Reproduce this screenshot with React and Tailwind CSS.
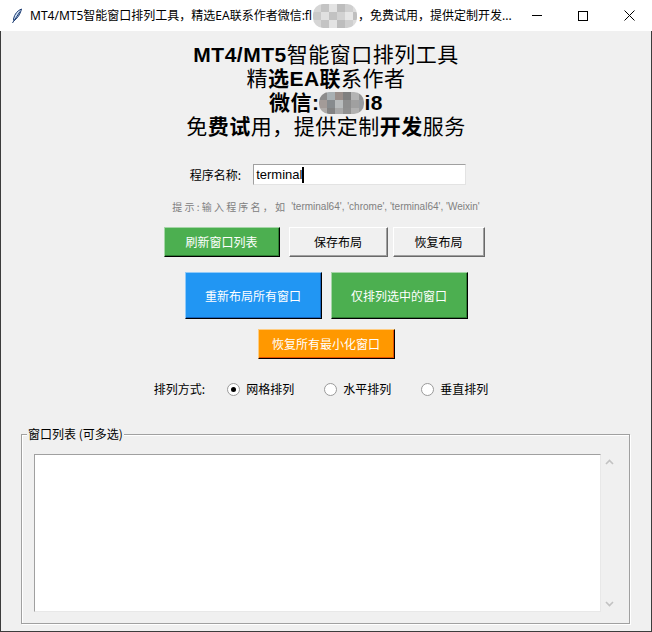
import React from "react";

const CJK = { fontFamily: '"Noto Sans CJK SC", "Noto Sans", sans-serif' };
const ARIAL_CJK = { fontFamily: '"Liberation Sans", "Noto Sans CJK SC", sans-serif' };

function Mosaic({ cols, rows, size, colors, className }) {
  const cells = [];
  for (let r = 0; r < rows; r++) {
    for (let c = 0; c < cols; c++) {
      cells.push(
        <div
          key={r + "-" + c}
          style={{ width: size, height: size, background: colors[(r * cols + c) % colors.length] }}
        />
      );
    }
  }
  return (
    <span
      className={"inline-grid overflow-hidden rounded-[10px] blur-[0.6px] align-middle " + className}
      style={{ gridTemplateColumns: `repeat(${cols}, ${size}px)` }}
    >
      {cells}
    </span>
  );
}

function Feather() {
  return (
    <svg width="12" height="16" viewBox="0 0 12 16">
      <path d="M10.5 1 C6.5 2.5 3.5 6 2.5 11 L2.8 12.5 C6 11 9 7 10.5 1 Z" fill="#cfe0f5" stroke="#1d3d73" strokeWidth="1" />
      <path d="M9 3.5 L3 13 M1.5 15 L3 12.5" stroke="#1d3d73" strokeWidth="1" fill="none" />
    </svg>
  );
}

function ColorButton({ bg, light, dark, className, children }) {
  return (
    <div
      className={"flex items-center justify-center text-white text-[12px] border-t border-l border-r border-b border-r-black border-b-black " + className}
      style={{
        ...CJK,
        background: bg,
        borderTopColor: light,
        borderLeftColor: light,
        boxShadow: `inset -1px -1px 0 ${dark}`,
      }}
    >
      {children}
    </div>
  );
}

function GrayButton({ className, children }) {
  return (
    <div
      className={"flex items-center justify-center text-black text-[12px] bg-[#f0f0f0] border-t border-l border-white border-r border-b border-r-[#696969] border-b-[#696969] shadow-[inset_-1px_-1px_0_#a0a0a0] " + className}
      style={CJK}
    >
      {children}
    </div>
  );
}

function Radio({ checked, label }) {
  return (
    <div className="flex items-center">
      <div className="w-[13px] h-[13px] rounded-full border border-[#9a9a9a] bg-white flex items-center justify-center">
        {checked && <div className="w-[5px] h-[5px] rounded-full bg-black" />}
      </div>
      <span className="ml-[6px] text-[12px] text-black" style={CJK}>{label}</span>
    </div>
  );
}

export default function App() {
  const darkBlur = ["#8c8c8c", "#a9b0b3", "#9a8f8b", "#7f7f7f", "#b4b4b4", "#959595", "#a39b98", "#878b8e", "#b9bcbd", "#8e8e8e", "#a0a0a0", "#999ca0", "#aeaaa8", "#838383", "#a8a8a8", "#909090", "#b0b0b0", "#9c9c9c"];
  const lightBlur = ["#d6d6d6", "#c4c4c4", "#e3e3e3", "#bdbdbd", "#cfcfcf", "#dcdcdc", "#c9c9c9", "#e0e0e0", "#c2c2c2", "#d2d2d2", "#e6e6e6", "#bfbfbf"];

  return (
    <div className="w-[652px] h-[632px] flex flex-col bg-[#f0f0f0] overflow-hidden">
      {/* Title bar */}
      <div className="h-[31px] bg-white flex items-center shrink-0">
        <div className="w-[30px] flex justify-center pl-[4px]"><Feather /></div>
        <div className="flex items-center text-[12px] text-black whitespace-nowrap" style={{ fontFamily: '"Noto Sans", "Noto Sans CJK SC", sans-serif' }}>
          <span>MT4/MT5智能窗口排列工具，精选EA联系作者微信:fl</span>
          <Mosaic cols={6} rows={3} size={8} colors={lightBlur} className="w-[44px] h-[24px] mx-[1px]" />
          <span>，免费试用，提供定制开发...</span>
        </div>
        <div className="flex-1" />
        <div className="w-[46px] h-[31px] flex items-center justify-center">
          <div className="w-[10px] h-px bg-black" />
        </div>
        <div className="w-[46px] h-[31px] flex items-center justify-center">
          <div className="w-[10px] h-[10px] border border-black" />
        </div>
        <div className="w-[46px] h-[31px] flex items-center justify-center">
          <svg width="11" height="11" viewBox="0 0 11 11"><path d="M0.5 0.5 L10.5 10.5 M10.5 0.5 L0.5 10.5" stroke="#000" strokeWidth="1" /></svg>
        </div>
      </div>

      {/* Content */}
      <div className="flex-1 flex flex-col items-center border-l border-r border-b border-[#3c3c3c]">
        {/* Heading */}
        <div className="mt-[12px] flex flex-col items-center text-[21px] leading-[24px] text-black tracking-[0.5px]" style={ARIAL_CJK}>
          <div><b>MT4/MT5</b>智能窗口排列工具</div>
          <div>精<b>选EA联</b>系作者</div>
          <div className="flex items-center">
            <b>微信:</b>
            <Mosaic cols={6} rows={3} size={8} colors={darkBlur} className="w-[45px] h-[22px]" />
            <b>i8</b>
          </div>
          <div>免<b>费试</b>用，提供定制<b>开发</b>服务</div>
        </div>

        {/* Program name */}
        <div className="mt-[25px] flex items-center ml-[4px]">
          <span className="text-[12px] text-black" style={CJK}>程序名称:</span>
          <div className="ml-[12px] w-[213px] h-[21px] bg-white border-t border-l border-[#a0a0a0] border-r border-b border-r-[#e3e3e3] border-b-[#e3e3e3] flex items-center pl-[2px]">
            <span className="text-[13px] text-black leading-none" style={{ fontFamily: '"Liberation Sans", sans-serif' }}>terminal</span>
            <div className="w-[2px] h-[16px] bg-black" />
          </div>
        </div>

        {/* Hint */}
        <div className="mt-[14px] flex items-center text-[10px] text-[#808080] whitespace-nowrap" style={ARIAL_CJK}>
          <span className="tracking-[2.2px]" style={CJK}>提示:输入程序名，如</span>
          <span className="ml-[4px]">'terminal64', 'chrome', 'terminal64', 'Weixin'</span>
        </div>

        {/* Row 1 */}
        <div className="mt-[13px] flex items-center mr-[4px]">
          <ColorButton bg="#4caf50" light="#a5d6a7" dark="#2e7d32" className="w-[116px] h-[30px]">刷新窗口列表</ColorButton>
          <GrayButton className="ml-[9px] w-[99px] h-[30px]">保存布局</GrayButton>
          <GrayButton className="ml-[5px] w-[92px] h-[30px]">恢复布局</GrayButton>
        </div>

        {/* Row 2 */}
        <div className="mt-[15px] flex items-center">
          <ColorButton bg="#2196f3" light="#90caf9" dark="#1565c0" className="w-[137px] h-[47px]">重新布局所有窗口</ColorButton>
          <ColorButton bg="#4caf50" light="#a5d6a7" dark="#2e7d32" className="ml-[9px] w-[137px] h-[47px]">仅排列选中的窗口</ColorButton>
        </div>

        {/* Row 3 */}
        <div className="mt-[10px] flex items-center">
          <ColorButton bg="#ff9800" light="#ffcc80" dark="#e65100" className="w-[137px] h-[30px]">恢复所有最小化窗口</ColorButton>
        </div>

        {/* Radio row */}
        <div className="mt-[21px] flex items-center mr-[10px]">
          <span className="text-[12px] text-black" style={CJK}>排列方式:</span>
          <div className="ml-[22px]"><Radio checked label="网格排列" /></div>
          <div className="ml-[30px]"><Radio label="水平排列" /></div>
          <div className="ml-[30px]"><Radio label="垂直排列" /></div>
        </div>

        {/* Group box */}
        <div className="mt-[36px] self-stretch ml-[20px] mr-[21px] h-[190px] relative border border-[#a0a0a0] shadow-[1px_1px_0_#ffffff,inset_1px_1px_0_#ffffff]">
          <span className="absolute left-[5px] top-[-9px] bg-[#f0f0f0] text-[12px] leading-[16px] text-black px-px" style={CJK}>窗口列表 (可多选)</span>
          <div className="flex mt-[19px] ml-[12px] h-[158px]">
            <div className="w-[567px] h-full bg-white border-t border-l border-[#a0a0a0] border-r border-b border-r-[#e8e8e8] border-b-[#e8e8e8]" />
            <div className="w-[16px] h-full flex flex-col items-center justify-between py-[5px]">
              <svg width="9" height="6" viewBox="0 0 9 6"><path d="M1 5 L4.5 1.5 L8 5" stroke="#c2c2c2" strokeWidth="1.6" fill="none" /></svg>
              <svg width="9" height="6" viewBox="0 0 9 6"><path d="M1 1 L4.5 4.5 L8 1" stroke="#c2c2c2" strokeWidth="1.6" fill="none" /></svg>
            </div>
          </div>
        </div>
      </div>
    </div>
  );
}
